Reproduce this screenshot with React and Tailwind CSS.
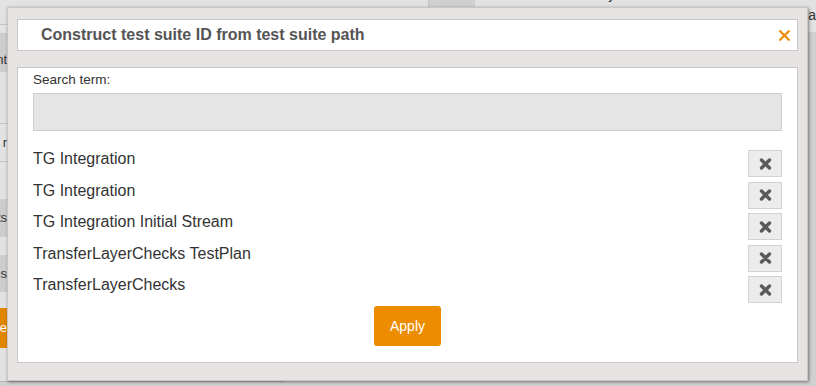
import React from "react";

const items = [
  "TG Integration",
  "TG Integration",
  "TG Integration Initial Stream",
  "TransferLayerChecks TestPlan",
  "TransferLayerChecks",
];

function RemoveIcon() {
  return (
    <svg width="13" height="12" viewBox="0 0 13 12">
      <path
        d="M2.5 2 L10.5 10 M10.5 2 L2.5 10"
        stroke="#5a5a5a"
        strokeWidth="3.4"
        strokeLinecap="round"
      />
    </svg>
  );
}

function CloseIcon() {
  return (
    <svg width="13" height="13" viewBox="0 0 13 13">
      <path
        d="M1.5 1.5 L11.5 11.5 M11.5 1.5 L1.5 11.5"
        stroke="#ee8c00"
        strokeWidth="2.2"
      />
    </svg>
  );
}

function Backdrop() {
  return (
    <div className="flex w-full h-full">
      {/* left side panel */}
      <div className="w-[302px] h-[382px] flex flex-col bg-[#e2e2e2] border-b border-[#b5b5b5] text-[13px] text-[#333]">
        <div className="h-[25px] border-b border-[#c4c4c4]" />
        <div className="mt-[8px] h-[39px] w-[30px] bg-[#cdcdcd] flex items-end justify-end pb-[3px] pr-[23px]">nt</div>
        <div className="mt-[51px] h-[39px] w-[30px] border-y border-[#c4c4c4] flex items-center justify-end pr-[23px]">r</div>
        <div className="mt-[37px] h-[38px] w-[30px] bg-[#cdcdcd] flex items-center justify-end pr-[23px]">ts</div>
        <div className="mt-[18px] h-[37px] w-[30px] bg-[#cdcdcd] flex items-center justify-end pr-[23px]">es</div>
        <div className="mt-[16px] h-[40px] w-[30px] bg-[#e08600] text-white flex items-center justify-end pr-[23px]">te</div>
      </div>
      <div className="w-[153px] h-[30px] border-r border-[#c4c4c4] bg-[#e2e2e2]" />
      <div className="ml-[17px] w-[31px] h-[8px] bg-[#cfcfcf]" />
      {/* right content area */}
      <div className="flex-1 flex flex-col">
        <div className="h-[32px] bg-[#e2e2e2] text-[14px] text-[#333] leading-[17px] whitespace-nowrap overflow-hidden">
          <div className="-mt-[14px] pl-[20px]">test case sdirectory ALM test case</div>
          <div className="pl-[300px] mt-[4px]">test ca</div>
          <div className="pl-[306px] text-[15px] leading-[17px] mt-[1px]">T</div>
        </div>
      </div>
    </div>
  );
}

export default function App() {
  return (
    <div
      className="relative w-[816px] h-[386px] overflow-hidden bg-[#d0d0d0]"
      style={{ fontFamily: '"Liberation Sans", Arial, sans-serif' }}
    >
      <Backdrop />

      {/* dialog */}
      <div className="absolute left-[7px] top-[7px] w-[801px] h-[374px] bg-[#e6e3e2] border border-[#c9c6c5] shadow-[1px_1px_3px_rgba(0,0,0,0.45)] px-[9px] pt-[11px]">
        <div className="h-[32px] bg-white border border-[#c8c8c8] flex items-center justify-between pl-[23px] pr-[6px]">
          <span className="text-[16px] font-bold text-[#555]">
            Construct test suite ID from test suite path
          </span>
          <CloseIcon />
        </div>

        <div className="mt-[16px] h-[296px] bg-white border border-[#c8c8c8] px-[15px] pt-[4px]">
          <div className="text-[13.5px] text-[#333] leading-[16px]">Search term:</div>
          <div className="mt-[5px] h-[38px] bg-[#e5e5e5] border border-[#cdcdcd]" />

          <div className="mt-[19px] flex flex-col gap-[4.5px]">
            {items.map((name, i) => (
              <div key={i} className="h-[27px] flex items-start justify-between">
                <span className="text-[16px] leading-[18px] text-[#333]">{name}</span>
                <button className="w-[34px] h-[27px] bg-[#ececec] border border-[#d2d2d2] flex items-center justify-center">
                  <RemoveIcon />
                </button>
              </div>
            ))}
          </div>

          <div className="mt-[3px] flex justify-center">
            <button className="w-[67px] h-[40px] bg-[#ee8c00] rounded-[3px] text-white text-[14px]">
              Apply
            </button>
          </div>
        </div>
      </div>
    </div>
  );
}
